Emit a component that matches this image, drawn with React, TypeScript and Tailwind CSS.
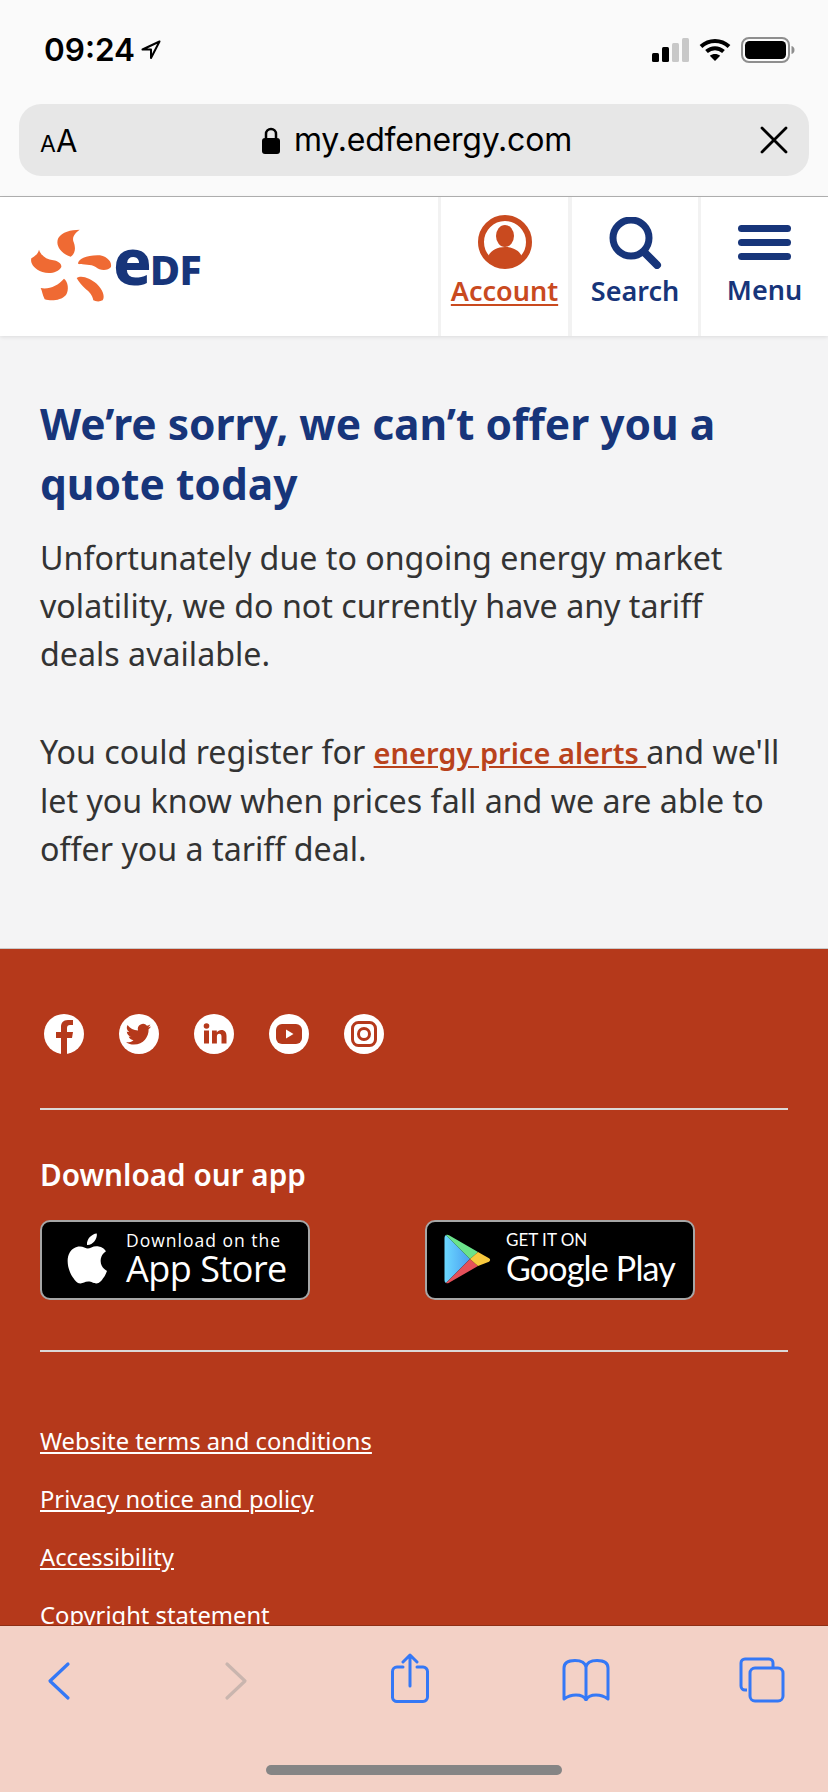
import React from "react";

const Social = ({ children }: { children: React.ReactNode }) => (
  <svg width="40" height="40" viewBox="0 0 40 40" className="shrink-0">
    <circle cx="20" cy="20" r="20" fill="#ffffff" />
    {children}
  </svg>
);

const RED = "#b5391b";

export default function App() {
  return (
    <div className="h-[1792px] w-[828px] flex flex-col overflow-hidden bg-[#f4f4f5] font-['Noto_Sans',sans-serif]">
      {/* Safari top */}
      <div className="h-[197px] shrink-0 bg-[#fafafa] border-b border-[#b2b2b2] flex flex-col">
        <div className="h-[104px] flex items-start justify-between pl-[44px] pr-[33px] pt-[32px]">
          <div className="flex items-center gap-[6px] font-['Inter',sans-serif] font-semibold text-[31.5px] leading-[36px] text-black">
            <span>09:24</span>
            <svg width="20" height="20" viewBox="0 0 20 20" fill="none" stroke="#000" strokeWidth="2" strokeLinejoin="round"><path d="M18.5 1.5 1.5 9.5h8.5v8.5z" /></svg>
          </div>
          <div className="flex items-center gap-[10px] pt-[5px]">
            <svg width="37" height="24" viewBox="0 0 37 24"><rect x="0" y="15" width="7" height="9" rx="1.5" fill="#000" /><rect x="10" y="9" width="7" height="15" rx="1.5" fill="#000" /><rect x="20" y="5" width="7" height="19" rx="1.5" fill="#c8c8c8" /><rect x="30" y="0" width="7" height="24" rx="1.5" fill="#c8c8c8" /></svg>
            <svg width="32" height="24" viewBox="0 0 32 24" fill="none" stroke="#000" strokeWidth="4"><path d="M2 8.5c8-7.5 20-7.5 28 0" /><path d="M7.5 13.5c5-4.5 12-4.5 17 0" /><path d="M16 23l-5.2-5.2c3-2.4 7.4-2.4 10.4 0z" fill="#000" stroke="none" /></svg>
            <svg width="54" height="26" viewBox="0 0 54 26"><rect x="1" y="1" width="47" height="24" rx="7" fill="none" stroke="#8e8e8e" strokeWidth="2" /><rect x="4" y="4" width="41" height="18" rx="4.5" fill="#000" /><path d="M50.5 9c2 .6 3 2 3 4s-1 3.4-3 4z" fill="#8e8e8e" /></svg>
          </div>
        </div>
        <div className="mx-[19px] w-[790px] h-[72px] rounded-[22px] bg-[#e7e7e7] flex items-center justify-between pl-[21px] pr-[21px] font-['Inter',sans-serif] text-black">
          <div className="w-[40px] flex items-baseline font-normal"><span className="text-[23px] leading-none">A</span><span className="text-[31px] leading-none">A</span></div>
          <div className="flex items-center gap-[14px] pr-[6px]">
            <svg width="18" height="27" viewBox="0 0 18 27"><path d="M4 11V7a5 5 0 0 1 10 0v4" fill="none" stroke="#000" strokeWidth="2.5" /><rect x="0" y="11" width="18" height="16" rx="3" fill="#000" /></svg>
            <span className="text-[32px] leading-[40px] tracking-[-0.2px]">my.edfenergy.com</span>
          </div>
          <svg width="28" height="28" viewBox="0 0 28 28" stroke="#000" strokeWidth="2.8" strokeLinecap="round"><path d="M2 2l24 24M26 2 2 26" /></svg>
        </div>
      </div>

      {/* Header */}
      <div className="h-[139px] shrink-0 bg-white flex items-stretch justify-between shadow-[0_1px_4px_rgba(0,0,0,0.1)] relative">
        <div className="flex items-center pl-[30px] pb-[2px]">
          <svg width="84" height="74" viewBox="28 58 252 222" fill="#ef6a33" className="mt-[1px]">
            <path d="M177 60C150 61 124 66 113 85C104 104 116 130 150 141C166 130 165 112 158 95C154 80 165 68 177 60Z" />
            <path d="M172 162C172 148 200 135 238 137C262 142 274 158 271 172C262 184 238 184 225 172C210 162 190 166 172 162Z" />
            <path d="M55 120C60 135 75 150 98 152C112 154 123 162 122 172C112 190 85 194 65 187C40 178 28 160 32 146C40 140 52 135 55 120Z" />
            <path d="M60 235C85 240 112 228 130 207C142 215 146 240 136 256C120 274 90 274 72 269C65 255 65 245 60 235Z" />
            <path d="M168 205C182 195 208 205 228 222C246 240 254 260 246 272C235 278 222 274 218 272C215 255 205 246 195 238C183 227 174 216 168 205Z" />
          </svg>
          <div className="flex items-baseline text-[#17357a] font-extrabold font-['Noto_Sans',sans-serif] ml-[-1px] mt-[-10px] leading-none">
            <span className="text-[64px] leading-none font-extrabold">e</span>
            <span className="text-[41.5px] leading-none font-extrabold tracking-[-1px] ml-[-2px]">DF</span>
          </div>
        </div>
        <div className="flex items-stretch text-[27px] font-semibold leading-[34px]">
          <div className="w-[130px] border-l-[3px] border-[#f2f2f2] flex flex-col items-center pt-[18px]">
            <svg width="54" height="54" viewBox="0 0 54 54" className="mb-[5px]">
              <circle cx="27" cy="27" r="24" fill="none" stroke="#c94a1f" strokeWidth="6" />
              <clipPath id="acc"><circle cx="27" cy="27" r="24" /></clipPath>
              <g fill="#c94a1f" clipPath="url(#acc)"><ellipse cx="27" cy="21" rx="9" ry="11" /><path d="M8 52c0-14 8-20 19-20s19 6 19 20z" /></g>
            </svg>
            <span className="text-[#c94a1f] underline underline-offset-[3px]">Account</span>
          </div>
          <div className="w-[130px] border-l-[4px] border-[#f2f2f2] flex flex-col items-center pt-[20px]">
            <svg width="54" height="52" viewBox="0 0 54 52" className="mb-[5px]" fill="none" stroke="#17357a">
              <circle cx="23" cy="21" r="18" strokeWidth="7" />
              <path d="M36 35l13 13" strokeWidth="8" strokeLinecap="round" />
            </svg>
            <span className="text-[#17357a]">Search</span>
          </div>
          <div className="w-[130px] border-l-[3px] border-[#f2f2f2] flex flex-col items-center pt-[28px]">
            <div className="flex flex-col gap-[7px] mb-[13px]">
              <div className="w-[53px] h-[7px] rounded-full bg-[#17357a]" />
              <div className="w-[53px] h-[7px] rounded-full bg-[#17357a]" />
              <div className="w-[53px] h-[7px] rounded-full bg-[#17357a]" />
            </div>
            <span className="text-[#17357a]">Menu</span>
          </div>
        </div>
      </div>

      {/* Main */}
      <div className="h-[612px] shrink-0 px-[40px] pt-[58px] text-[#333333]">
        <h1 className="text-[42.5px] leading-[60px] font-bold text-[#17357a] mb-[20px]">We’re sorry, we can’t offer you a quote today</h1>
        <p className="text-[32.2px] leading-[48px] mb-[50px]">Unfortunately due to ongoing energy market volatility, we do not currently have any tariff deals available.</p>
        <p className="text-[32.2px] leading-[48px]">You could register for <a className="font-semibold text-[29px] text-[#b9421c] underline">energy price alerts </a>and we'll let you know when prices fall and we are able to offer you a tariff deal.</p>
      </div>

      {/* Footer */}
      <div className="flex-1 min-h-0 overflow-hidden bg-[#b5391b] border-t border-[#c9c9c9] px-[40px] text-white">
        <div className="flex gap-[35px] pl-[4px] pt-[65px] pb-[54px] border-b-2 border-[#dcd8d6]">
          <Social><path d="M23 40V24h5l1-6h-6v-4c0-2 1-3 3-3h3V6h-5c-5 0-7 3-7 7v5h-5v6h5v16z" fill={RED} /></Social>
          <Social><path d="M32 12.5c-1 .5-2 .7-3 .9 1-.7 1.9-1.7 2.3-2.9-1 .6-2.1 1-3.3 1.3A5.2 5.2 0 0 0 19 16.5C14.7 16.3 11 14.3 8.5 11c-1.4 2.4-.7 5.4 1.6 7-.8 0-1.6-.2-2.3-.6 0 2.5 1.8 4.6 4.2 5.1-.8.2-1.6.2-2.3.1.7 2.1 2.6 3.5 4.8 3.6-2.1 1.7-4.8 2.4-7.5 2.1 2.3 1.5 5.1 2.3 7.9 2.3 9.6 0 15-8.1 14.7-15.4 1-.8 1.8-1.7 2.4-2.7z" fill={RED} /></Social>
          <Social><g fill={RED}><circle cx="12.5" cy="12" r="2.8" /><rect x="10" y="16.5" width="5" height="13" /><path d="M18 16.5h4.8v2c1-1.5 2.6-2.4 4.5-2.4 3.7 0 5.2 2.4 5.2 6v7.4h-5v-6.7c0-1.9-.6-3-2.2-3-1.7 0-2.4 1.2-2.4 3v6.7H18z" /></g></Social>
          <Social><rect x="7" y="10" width="26" height="20" rx="6" fill={RED} /><path d="M17 15.5v9l7.5-4.5z" fill="#fff" /></Social>
          <Social><rect x="8.5" y="8.5" width="23" height="23" rx="6" fill="none" stroke={RED} strokeWidth="3" /><circle cx="20" cy="20" r="5.5" fill="none" stroke={RED} strokeWidth="3" /></Social>
        </div>

        <div className="border-b-2 border-[#dcd8d6] h-[242px] pt-[45px]">
          <div className="text-[29.7px] leading-[40px] font-semibold mb-[25px]">Download our app</div>
          <div className="flex gap-[115px]">
            <div className="w-[270px] h-[80px] rounded-[10px] bg-black border-2 border-[#a6a6a6] flex items-center pl-[23px] gap-[19px] pb-[2px]">
              <svg width="42" height="52" viewBox="8 6 33 40" preserveAspectRatio="none" fill="#fff"><path d="M36 27.5c0-5 4-7.4 4.2-7.5-2.3-3.3-5.8-3.8-7-3.8-3-.3-5.8 1.7-7.3 1.7s-3.8-1.7-6.3-1.6c-3.2 0-6.2 1.9-7.9 4.7-3.4 5.8-.9 14.4 2.4 19.1 1.6 2.3 3.5 4.9 6 4.8 2.4-.1 3.3-1.5 6.2-1.5s3.7 1.5 6.3 1.5c2.6 0 4.2-2.3 5.8-4.6 1.8-2.6 2.6-5.2 2.6-5.3-.1 0-4.9-1.9-5-7.5z" /><path d="M31 12.5c1.4-1.6 2.3-3.9 2-6.2-2 .1-4.3 1.3-5.7 3-1.2 1.4-2.3 3.7-2 5.9 2.2.2 4.4-1.1 5.7-2.7z" /></svg>
              <div className="flex flex-col">
                <span className="text-[17.5px] leading-[20px] tracking-[1px] font-['Open_Sans',sans-serif]">Download on the</span>
                <span className="text-[36px] leading-[38px] font-['Open_Sans',sans-serif] tracking-[-0.5px] font-medium">App Store</span>
              </div>
            </div>
            <div className="w-[270px] h-[80px] rounded-[10px] bg-black border-2 border-[#a6a6a6] flex items-center pl-[17px] gap-[14px] pb-[2px]">
              <svg width="48" height="52" viewBox="0 0 48 52">
                <defs><linearGradient id="gp" x1="0" y1="0" x2="1" y2="0"><stop offset="0" stopColor="#6bd8ff" /><stop offset="1" stopColor="#4a9ff0" /></linearGradient></defs>
                <path d="M2 2 26 26 2 50c-1-.5-1.5-1.5-1.5-3V5C.5 3.5 1 2.5 2 2z" fill="url(#gp)" />
                <path d="M2 2c1-.5 2-.4 3 .2L34 19l-8 7z" fill="#6be38b" />
                <path d="M2 50c1 .5 2 .4 3-.2L34 33l-8-7z" fill="#e4505a" />
                <path d="M34 19l11 6.3c1.5 1 1.5 2.4 0 3.4L34 33l-8-7z" fill="#f8c93e" />
              </svg>
              <div className="flex flex-col font-['Lato',sans-serif]">
                <span className="text-[17px] leading-[18px] tracking-[0px]">GET IT ON</span>
                <span className="text-[34px] leading-[38px] tracking-[-0.8px]">Google Play</span>
              </div>
            </div>
          </div>
        </div>

        <div className="flex flex-col gap-[26px] pt-[73px] text-[23.75px] leading-[32px]">
          <a className="underline">Website terms and conditions</a>
          <a className="underline">Privacy notice and policy</a>
          <a className="underline">Accessibility</a>
          <a className="underline">Copyright statement</a>
        </div>
      </div>

      {/* Safari bottom */}
      <div className="h-[167px] shrink-0 bg-[#f3d1c6] border-t border-[#8f2f15] flex flex-col">
        <div className="h-[139px]">
          <div className="flex items-start pt-[27px] pl-[47px]">
            <svg width="24" height="40" viewBox="0 0 24 40" className="mt-[8px] mr-[153px]" fill="none" stroke="#3478f6" strokeWidth="3.2" strokeLinecap="round" strokeLinejoin="round"><path d="M21 3 3 20l18 17" /></svg>
            <svg width="24" height="40" viewBox="0 0 24 40" className="mt-[8px] mr-[143px]" fill="none" stroke="#c9b5ae" strokeWidth="3.2" strokeLinecap="round" strokeLinejoin="round"><path d="M3 3l18 17L3 37" /></svg>
            <svg width="38" height="50" viewBox="0 0 38 50" className="mr-[133px]" fill="none" stroke="#3478f6" strokeWidth="3" strokeLinecap="round" strokeLinejoin="round"><path d="M12 14H6a4.5 4.5 0 0 0-4.5 4.5v26A4.5 4.5 0 0 0 6 48.5h26a4.5 4.5 0 0 0 4.5-4.5V18.5A4.5 4.5 0 0 0 32 14h-6M19 33V2M12 9l7-7 7 7" /></svg>
            <svg width="48" height="42" viewBox="0 0 48 42" className="mt-[6px] mr-[129px]" fill="none" stroke="#3478f6" strokeWidth="3" strokeLinejoin="round"><path d="M24 8C23 3 19 1.5 13 1.5 7 1.5 2 3 2 9v31c4-3 8-4 12-4 4 0 8 1 10 5 2-4 6-5 10-5s8 1 12 4V9c0-6-5-7.5-11-7.5-6 0-10 1.5-11 6.5zM24 8v33" /></svg>
            <svg width="46" height="46" viewBox="0 0 46 46" className="mt-[4px]" fill="none" stroke="#3478f6" strokeWidth="3"><path d="M8 33H6a4 4 0 0 1-4-4V6a4 4 0 0 1 4-4h24a4 4 0 0 1 4 4v4" /><rect x="11" y="11" width="33" height="33" rx="5" /></svg>
          </div>
        </div>
        <div className="w-[296px] h-[10px] rounded-full bg-[#858585] mx-auto" />
      </div>
    </div>
  );
}
